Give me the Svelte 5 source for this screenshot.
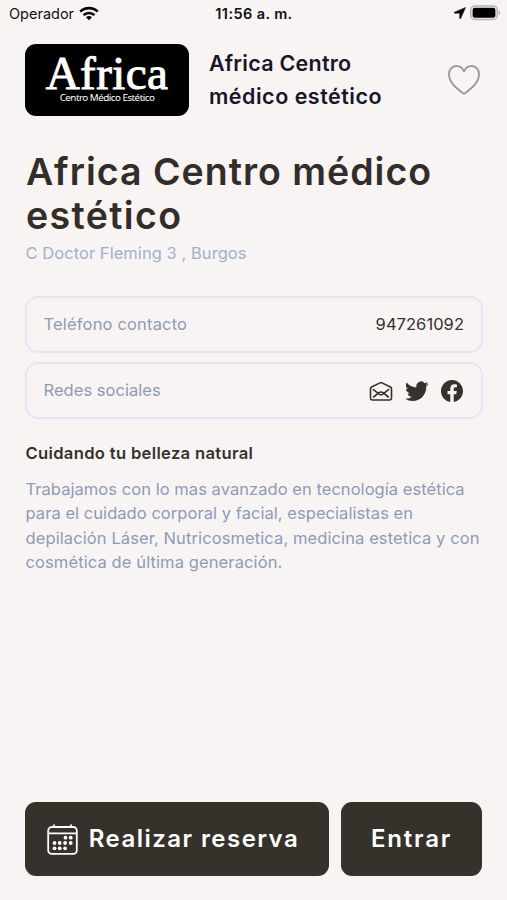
<script lang="ts">
	const phone = '947261092';

	const description = [
		{ text: 'Trabajamos con lo mas avanzado en tecnología estética', spacing: 0.05 },
		{ text: 'para el cuidado corporal y facial, especialistas en', spacing: 0.05 },
		{ text: 'depilación Láser, Nutricosmetica, medicina estetica y con', spacing: 0.1 },
		{ text: 'cosmética de última generación.', spacing: 0.11 }
	];

	// Dots of the calendar icon, on a 31x31 grid
	const days = [
		[18.5, 13.7], [23.7, 13.7],
		[7.5, 19], [12.7, 19], [18.1, 19], [23.7, 19],
		[7.5, 24.3], [12.7, 24.3], [18.1, 24.3]
	];
</script>

<div class="screen">
	<div class="status">
		<div class="carrier">
			<span class="operator">Operador</span>
			<svg width="20" height="15" viewBox="0 0 20 15" fill="none" stroke="#080808">
				<path d="M1.2 5.6C6 .9 14 .9 18.8 5.6" stroke-width="2.6" />
				<path d="M4.5 9.1c3-2.9 8-2.9 11 0" stroke-width="2.5" />
				<path d="M10 14.2 7 11.2c1.7-1.6 4.3-1.6 6 0z" fill="#080808" stroke="none" />
			</svg>
		</div>
		<div class="clock">11:56 a. m.</div>
		<div class="indicators">
			<svg width="12" height="12" viewBox="0 0 12 12">
				<path d="M11.6.4.3 5.2c-.5.3-.3 1 .2 1h5.2v5.1c0 .6.8.7 1 .2z" fill="#080808" stroke="#080808" stroke-width=".5" />
			</svg>
			<svg width="31" height="16" viewBox="0 0 31 16">
				<rect x=".8" y=".9" width="26.4" height="13.6" rx="4" fill="#f8f4f3" stroke="#b5b2b1" stroke-width="1.5" />
				<rect x="2.6" y="2.7" width="22.8" height="10" rx="2" fill="#000" />
				<path d="M28.5 5.2c2.2.7 2.2 4.3 0 5z" fill="#b5b2b1" />
			</svg>
		</div>
	</div>

	<header class="header">
		<div class="logo">
			<span class="logo-name">Africa</span>
			<span class="logo-sub">Centro Médico Estético</span>
		</div>
		<div class="header-title">
			<span class="header-first">Africa Centro</span><br />
			<span class="header-second">médico estético</span>
		</div>
		<button class="favorite" aria-label="Favorito">
			<svg width="34" height="32" viewBox="0 0 34 32" fill="none" stroke="#9b9999" stroke-width="1.9" stroke-linejoin="round">
				<path d="M17 7.5C15.6 4 12.8 2 9.4 2 5 2 2 5.5 2 10.2c0 8.3 7.5 13.9 13.7 18.8.8.6 1.8.6 2.6 0C24.5 24.1 32 18.5 32 10.2 32 5.5 29 2 24.6 2 21.2 2 18.4 4 17 7.5z" />
			</svg>
		</button>
	</header>

	<main class="content">
		<h1 class="title">
			<span class="title-first">Africa Centro médico</span><br />
			<span class="title-second">estético</span>
		</h1>
		<p class="address">C Doctor Fleming 3 , Burgos</p>

		<section class="cards">
			<div class="card">
				<span class="label label-phone">Teléfono contacto</span>
				<span class="phone">{phone}</span>
			</div>
			<div class="card">
				<span class="label label-social">Redes sociales</span>
				<div class="social">
					<svg width="24" height="24" viewBox="0 0 24 24" fill="none" stroke="#35312d" stroke-width="1.6" stroke-linejoin="round" stroke-linecap="round">
						<path d="M1.5 9.8v9.2a2 2 0 0 0 2 2h17a2 2 0 0 0 2-2V9.8c0-.8-.4-1.4-1.1-1.8L13 3.9a2.3 2.3 0 0 0-2 0L2.6 8c-.7.4-1.1 1-1.1 1.8z" />
						<path d="m4.400 10.600 6.100 4.700c.9.600 2.100.600 3 0l6.100-4.700M4.600 18l5.400-4.300c1.200-.9 2.800-.9 4 0l5.400 4.300" />
					</svg>
					<svg width="24" height="24" viewBox="0 0 24 24" fill="#35312d">
						<path d="M23.6 4.9a9.7 9.7 0 0 1-2.8.8 4.8 4.8 0 0 0 2.1-2.7 9.6 9.6 0 0 1-3.1 1.2 4.8 4.8 0 0 0-8.3 4.4A13.7 13.7 0 0 1 1.6 3.6a4.8 4.8 0 0 0 1.5 6.5 4.8 4.8 0 0 1-2.2-.6v.1c0 2.3 1.7 4.3 3.9 4.7a4.8 4.8 0 0 1-2.2.1 4.8 4.8 0 0 0 4.5 3.4A9.7 9.7 0 0 1 .1 19.7a13.7 13.7 0 0 0 7.4 2.2c9 0 14.1-7.6 13.7-14.5a9.8 9.8 0 0 0 2.4-2.5z" />
					</svg>
					<svg width="24" height="24" viewBox="0 0 24 24" fill="#35312d">
						<path d="M23 12.067C23 5.955 18.075 1 12 1S1 5.955 1 12.067C1 17.591 5.023 22.17 10.281 23v-7.734H7.488v-3.199h2.793V9.63c0-2.773 1.643-4.305 4.155-4.305 1.204 0 2.463.216 2.463.216v2.724h-1.387c-1.367 0-1.793.853-1.793 1.729v2.073h3.051l-.488 3.199h-2.563V23C18.977 22.17 23 17.591 23 12.067z" />
					</svg>
				</div>
			</div>
		</section>

		<h2 class="subtitle">Cuidando tu belleza natural</h2>
		<p class="description">
			{#each description as line}
				<span class="line" style="letter-spacing: {line.spacing}px">{line.text}</span>
			{/each}
		</p>
	</main>

	<footer class="actions">
		<button class="action action-book">
			<svg width="31" height="31" viewBox="0 0 31 31" fill="none" stroke="#fff" stroke-width="1.8">
				<rect x="1.2" y="3" width="28.6" height="26.8" rx="3.5" />
				<path d="M1.2 9.3h28.6M7 .5v3M24 .5v3" />
				{#each days as [x, y]}
					<circle cx={x} cy={y} r="1.9" fill="#fff" stroke="none" />
				{/each}
			</svg>
			<span class="action-text">Realizar reserva</span>
		</button>
		<button class="action action-enter">
			<span class="action-text">Entrar</span>
		</button>
	</footer>
</div>

<style>
	:global(body) {
		margin: 0;
		background: #f8f4f3;
	}

	.screen {
		display: flex;
		flex-direction: column;
		box-sizing: border-box;
		height: 900px;
		overflow: hidden;
		background: #f8f4f3;
		color: #35312d;
		font-family: Inter, 'Liberation Sans', sans-serif;
	}

	button {
		border: none;
		padding: 0;
		background: none;
		font-family: inherit;
	}

	svg {
		display: block;
		flex: none;
	}

	.status {
		display: grid;
		grid-template-columns: 1fr auto 1fr;
		align-items: center;
		height: 26px;
		padding: 0 6px 0 9px;
		font-size: 14.5px;
		color: #111;
		white-space: nowrap;
	}

	.carrier,
	.indicators {
		display: flex;
		align-items: center;
	}

	.carrier {
		gap: 5px;
	}

	.indicators {
		justify-content: flex-end;
		gap: 4px;
	}

	.clock {
		margin-right: 2px;
		font-weight: 600;
		letter-spacing: 0.4px;
	}

	.header {
		display: flex;
		align-items: center;
		height: 72px;
		margin-top: 18px;
		padding: 0 26px 0 25px;
	}

	.logo {
		display: flex;
		flex-direction: column;
		align-items: center;
		flex: none;
		width: 164px;
		height: 72px;
		border-radius: 11px;
		background: #000;
		color: #fff;
	}

	.logo-name {
		height: 48px;
		font: 47px/59px 'Liberation Serif', serif;
		letter-spacing: 0.4px;
		-webkit-text-stroke: 1px #fff;
	}

	.logo-sub {
		font: 9.8px/12px 'Noto Sans', sans-serif;
		letter-spacing: -0.5px;
		white-space: nowrap;
	}

	.header-title {
		flex: 1;
		margin-left: 20px;
		font-size: 21.5px;
		line-height: 33px;
		font-weight: 600;
		color: #19162a;
		white-space: nowrap;
	}

	.header-first {
		letter-spacing: 0.25px;
	}

	.header-second {
		letter-spacing: 0.5px;
	}

	.content {
		padding: 0 24px 0 25px;
	}

	.title {
		margin: 34px 0 0 1px;
		font-size: 37.5px;
		line-height: 44px;
		font-weight: 600;
		color: #322d29;
		white-space: nowrap;
	}

	.title-first {
		letter-spacing: 1px;
	}

	.title-second {
		letter-spacing: 1.35px;
	}

	.address {
		margin: 4px 0 0 0.5px;
		font-size: 16.5px;
		line-height: 22px;
		letter-spacing: 0.05px;
		color: #a1b0ce;
	}

	.cards {
		display: flex;
		flex-direction: column;
		gap: 9px;
		margin-top: 32px;
	}

	.card {
		display: flex;
		align-items: center;
		justify-content: space-between;
		box-sizing: border-box;
		height: 57px;
		padding: 0 17px 0 16.5px;
		border: 2px solid #e8e4f5;
		border-radius: 13px;
		font-size: 16.5px;
	}

	.label {
		margin-top: -1px;
		color: #8e9bb3;
	}

	.label-phone {
		letter-spacing: 0.17px;
	}

	.label-social {
		letter-spacing: 0.04px;
	}

	.phone {
		margin-top: -1px;
		letter-spacing: 0.05px;
	}

	.social {
		display: flex;
		gap: 11.5px;
	}

	.subtitle {
		margin: 22px 0 0 0.5px;
		font-size: 16.6px;
		line-height: 24px;
		font-weight: 600;
		letter-spacing: 0.32px;
	}

	.description {
		margin: 12px 0 0 0.5px;
		font-size: 16.5px;
		line-height: 24.4px;
		color: #8e9bb8;
		white-space: nowrap;
	}

	.line {
		display: block;
	}

	.actions {
		display: flex;
		gap: 12px;
		margin-top: auto;
		padding: 0 25px 24px;
	}

	.action {
		display: flex;
		align-items: center;
		justify-content: center;
		box-sizing: border-box;
		height: 74px;
		border-radius: 11px;
		background: #35312b;
		color: #fff;
		font-size: 24px;
		font-weight: 600;
		letter-spacing: 1.45px;
		white-space: nowrap;
	}

	.action-text {
		margin-top: -2px;
	}

	.action-book {
		gap: 11px;
		width: 304px;
		padding-right: 8px;
	}

	.action-enter {
		width: 141px;
		letter-spacing: 1.8px;
	}
</style>
